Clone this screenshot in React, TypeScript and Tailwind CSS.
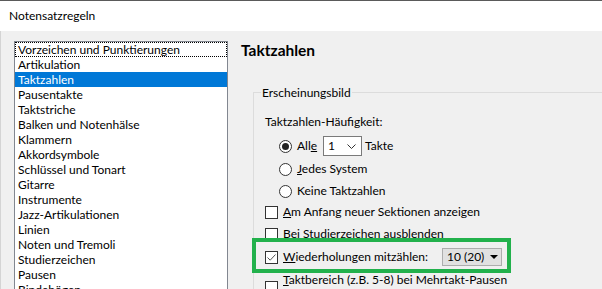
import React from "react";

const items = [
  "Vorzeichen und Punktierungen",
  "Artikulation",
  "Taktzahlen",
  "Pausentakte",
  "Taktstriche",
  "Balken und Notenhälse",
  "Klammern",
  "Akkordsymbole",
  "Schlüssel und Tonart",
  "Gitarre",
  "Instrumente",
  "Jazz-Artikulationen",
  "Linien",
  "Noten und Tremoli",
  "Studierzeichen",
  "Pausen",
  "Bindebögen",
];

const Radio = ({ checked }: { checked?: boolean }) => (
  <span className="w-[13px] h-[13px] rounded-full border border-[#333] bg-white flex items-center justify-center shrink-0">
    {checked && <span className="w-[7px] h-[7px] rounded-full bg-[#222]" />}
  </span>
);

const Check = ({ checked }: { checked?: boolean }) => (
  <span className="w-[13px] h-[13px] border border-[#333] bg-white flex items-center justify-center shrink-0">
    {checked && (
      <svg width="11" height="11" viewBox="0 0 11 11">
        <path d="M1.5 5.5 L4.2 8.2 L9.5 2.5" fill="none" stroke="#555" strokeWidth="1" />
      </svg>
    )}
  </span>
);

const App = () => {
  return (
    <div className="w-[602px] h-[289px] overflow-hidden bg-[#f0f0f0] border-t border-[#5a5a5a] flex flex-col font-['Lato',sans-serif] text-[12px] text-black">
      <div className="h-[30px] bg-white flex items-center pl-[9px] shrink-0">Notensatzregeln</div>
      <div className="flex flex-1 min-h-0 pl-[13px] border-l border-[#d4d4d4]">
        {/* category list */}
        <div className="w-[214px] mt-[10px] self-start border border-[#828790] bg-white shrink-0">
          {items.map((it, i) => (
            <div
              key={it}
              className={`h-[15px] leading-[15px] px-[3px] whitespace-nowrap ${
                i === 2 ? "bg-[#0078d7] text-white" : ""
              } ${i === 0 ? "outline-1 outline-dotted outline-black -outline-offset-1" : ""}`}
            >
              {it}
            </div>
          ))}
        </div>

        {/* settings */}
        <div className="ml-[13px] flex-1 pt-[8px] min-w-0">
          <div className="text-[15.5px] font-bold leading-[22px]">Taktzahlen</div>
          <fieldset className="mt-[24px] ml-[12px] w-[400px] h-[300px] border border-[#dcdcdc]">
            <legend className="ml-[7px] px-[1px] leading-[15px]">Erscheinungsbild</legend>
            <div className="pl-[11px] pt-[14px]">
              <div className="h-[15px] leading-[15px]">Taktzahlen-Häufigkeit:</div>
              <div className="mt-[6px] h-[22px] flex items-center pl-[14px]">
                <Radio checked />
                <span className="ml-[5px] w-[26px]">
                  All<span className="underline">e</span>
                </span>
                <div className="w-[39px] h-[20px] border border-[#7a7a7a] bg-white flex items-center justify-between pl-[4px] pr-[5px]">
                  <span>1</span>
                  <svg width="9" height="5" viewBox="0 0 9 5">
                    <path d="M0.5 0.5 L4.5 4.5 L8.5 0.5" fill="none" stroke="#333" strokeWidth="1" />
                  </svg>
                </div>
                <span className="ml-[3px]">Takte</span>
              </div>
              <div className="h-[24px] flex items-center pl-[14px]">
                <Radio />
                <span className="ml-[5px]">
                  <span className="underline">J</span>edes System
                </span>
              </div>
              <div className="h-[20px] flex items-center pl-[14px]">
                <Radio />
                <span className="ml-[5px]">Keine Taktzahlen</span>
              </div>
              <div className="h-[22px] flex items-center">
                <Check />
                <span className="ml-[5px]">
                  <span className="underline">A</span>m Anfang neuer Sektionen anzeigen
                </span>
              </div>
              <div className="h-[22px] flex items-center">
                <Check />
                <span className="ml-[5px]">Bei Studierzeichen ausblenden</span>
              </div>
              <div className="relative mt-[1px] h-[22px] flex items-center">
                <Check checked />
                <span className="ml-[5px] w-[159px]">
                  <span className="underline">W</span>iederholungen mitzählen:
                </span>
                <div className="w-[60px] h-[18px] bg-[#e1e1e1] border border-[#adadad] flex items-center justify-between pl-[4px] pr-[3px]">
                  <span>10 (20)</span>
                  <svg width="8" height="4" viewBox="0 0 8 4">
                    <path d="M0 0 L8 0 L4 4 Z" fill="#000" />
                  </svg>
                </div>
                <div className="absolute left-[-13px] top-[-8px] w-[259px] h-[35px] border-4 border-[#22b14c]" />
              </div>
              <div className="flex items-start pt-[4px]">
                <span className="mt-[9px]">
                  <Check />
                </span>
                <span className="ml-[5px] leading-[15px]">
                  <span className="underline">T</span>aktbereich (z.B. 5-8) bei Mehrtakt-Pausen
                </span>
              </div>
            </div>
          </fieldset>
        </div>
      </div>
    </div>
  );
};

export default App;
